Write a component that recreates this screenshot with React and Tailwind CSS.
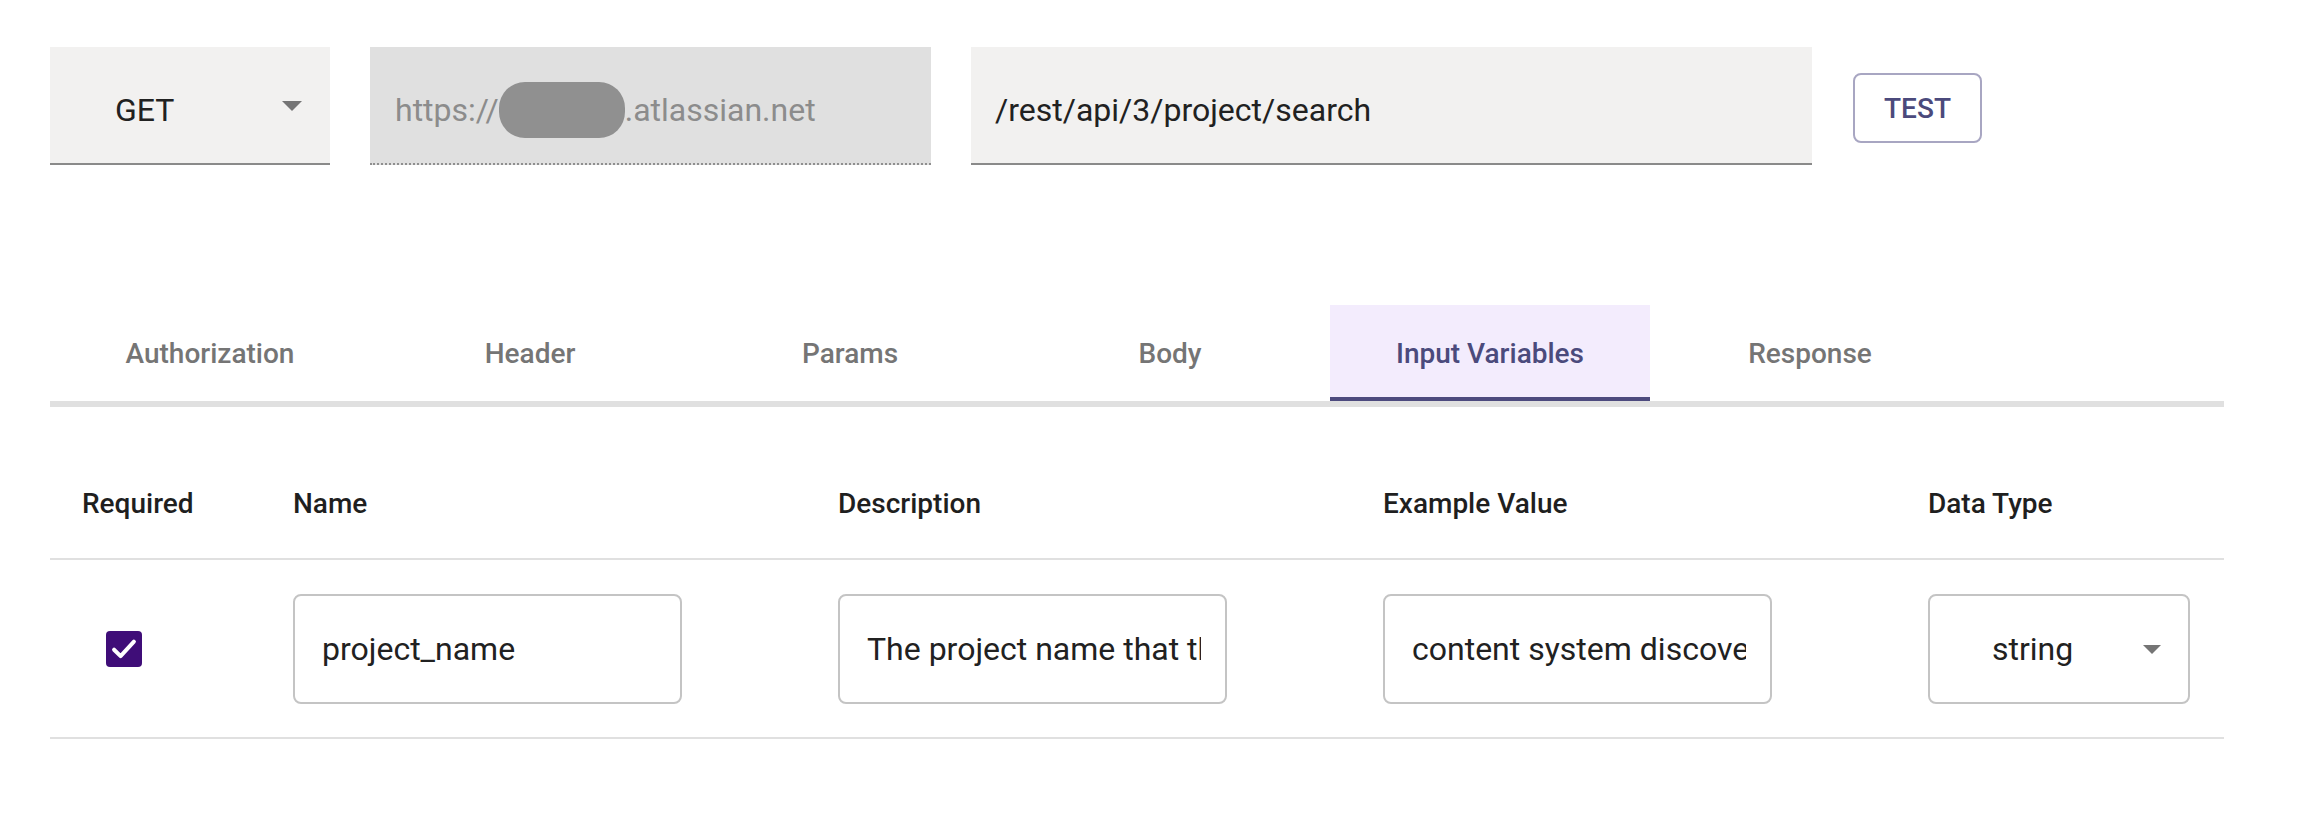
import { useState } from 'react';

const tabs = ['Authorization', 'Header', 'Params', 'Body', 'Input Variables', 'Response'];

const Caret = ({ className = '' }) => (
  <svg width="20" height="10" viewBox="0 0 20 10" className={className}>
    <path d="M0 0 L20 0 L10 10 Z" fill="#757575" />
  </svg>
);

const App = () => {
  const [activeTab, setActiveTab] = useState('Input Variables');
  const [required, setRequired] = useState(true);
  const [name, setName] = useState('project_name');
  const [description, setDescription] = useState('The project name that the user wants to search for');
  const [example, setExample] = useState('content system discovery');

  const fieldClass =
    'h-[110px] w-[389px] rounded-[8px] border-2 border-[#c4c4c4] bg-white pl-[27px] pr-[24px] text-[32px] text-[#212121] outline-none';

  return (
    <div className="min-h-screen bg-white pl-[50px] font-['Roboto',sans-serif] text-[#212121]">
      {/* Request line */}
      <div className="flex items-center pt-[47px]">
        <div className="flex h-[118px] w-[280px] items-center justify-between border-b-2 border-[#8a8a8a] bg-[#f2f1f0] pl-[65px] pr-[28px] pt-[10px]">
          <span className="text-[32px]">GET</span>
          <Caret className="-mt-[8px]" />
        </div>

        <div className="ml-[40px] flex h-[118px] w-[561px] items-center border-b-2 border-dotted border-[#8f8f8f] bg-[#e0e0e0] pl-[25px] pt-[10px] text-[32px] text-[#8c8c8c]">
          <span>https://</span>
          <span className="inline-block h-[56px] w-[126px] rounded-[26px] bg-[#909090]" />
          <span>.atlassian.net</span>
        </div>

        <div className="ml-[40px] flex h-[118px] w-[841px] items-center border-b-2 border-[#8a8a8a] bg-[#f2f1f0] pl-[24px] pt-[10px] text-[32px]">
          /rest/api/3/project/search
        </div>

        <button className="ml-[41px] mt-[4px] flex h-[70px] w-[129px] items-center justify-center rounded-[8px] border-2 border-[#a8a6c2] pt-[2px] text-[28px] font-medium text-[#4b4a7c]">
          TEST
        </button>
      </div>

      {/* Tabs */}
      <div className="mt-[140px] w-[2174px] border-b-[6px] border-[#e0e0e0]">
        <div className="flex">
          {tabs.map((tab) => (
            <button
              key={tab}
              onClick={() => setActiveTab(tab)}
              className={`flex h-[96px] w-[320px] items-center justify-center border-b-4 pt-[6px] text-[28px] font-medium ${
                activeTab === tab
                  ? 'border-[#4d4a7e] bg-[#f3ecfd] text-[#4b4a7c]'
                  : 'border-transparent text-[#757575]'
              }`}
            >
              {tab}
            </button>
          ))}
        </div>
      </div>

      {/* Input variables table */}
      <div className="mt-[40px] w-[2174px]">
        <div className="grid h-[113px] grid-cols-[211px_545px_545px_545px_328px] items-center border-b-2 border-[#e0e0e0] pt-[2px] text-[28px] font-medium text-[#1f1f1f]">
          <div className="pl-[32px]">Required</div>
          <div className="pl-[32px]">Name</div>
          <div className="pl-[32px]">Description</div>
          <div className="pl-[32px]">Example Value</div>
          <div className="pl-[32px]">Data Type</div>
        </div>

        <div className="grid h-[179px] grid-cols-[211px_545px_545px_545px_328px] items-center border-b-2 border-[#e0e0e0] pt-[1px] text-[32px]">
          <div className="pl-[56px]">
            <button
              onClick={() => setRequired(!required)}
              className={`flex h-[36px] w-[36px] items-center justify-center rounded-[4px] ${
                required ? 'bg-[#3f0d78]' : 'border-2 border-[#757575] bg-white'
              }`}
            >
              {required && (
                <svg width="34" height="34" viewBox="0 0 24 24">
                  <path d="M5 12.5 L9.6 17 L19 6.8" fill="none" stroke="white" strokeWidth="2.8" strokeLinecap="round" strokeLinejoin="round" />
                </svg>
              )}
            </button>
          </div>
          <div className="pl-[32px]">
            <input className={fieldClass} value={name} onChange={(e) => setName(e.target.value)} />
          </div>
          <div className="pl-[32px]">
            <input className={fieldClass} value={description} onChange={(e) => setDescription(e.target.value)} />
          </div>
          <div className="pl-[32px]">
            <input className={fieldClass} value={example} onChange={(e) => setExample(e.target.value)} />
          </div>
          <div className="pl-[32px]">
            <div className="flex h-[110px] w-[262px] items-center justify-between rounded-[8px] border-2 border-[#c4c4c4] pl-[62px] pr-[27px]">
              <span>string</span>
              <Caret className="h-[9px] w-[18px]" />
            </div>
          </div>
        </div>
      </div>
    </div>
  );
};

export default App;
